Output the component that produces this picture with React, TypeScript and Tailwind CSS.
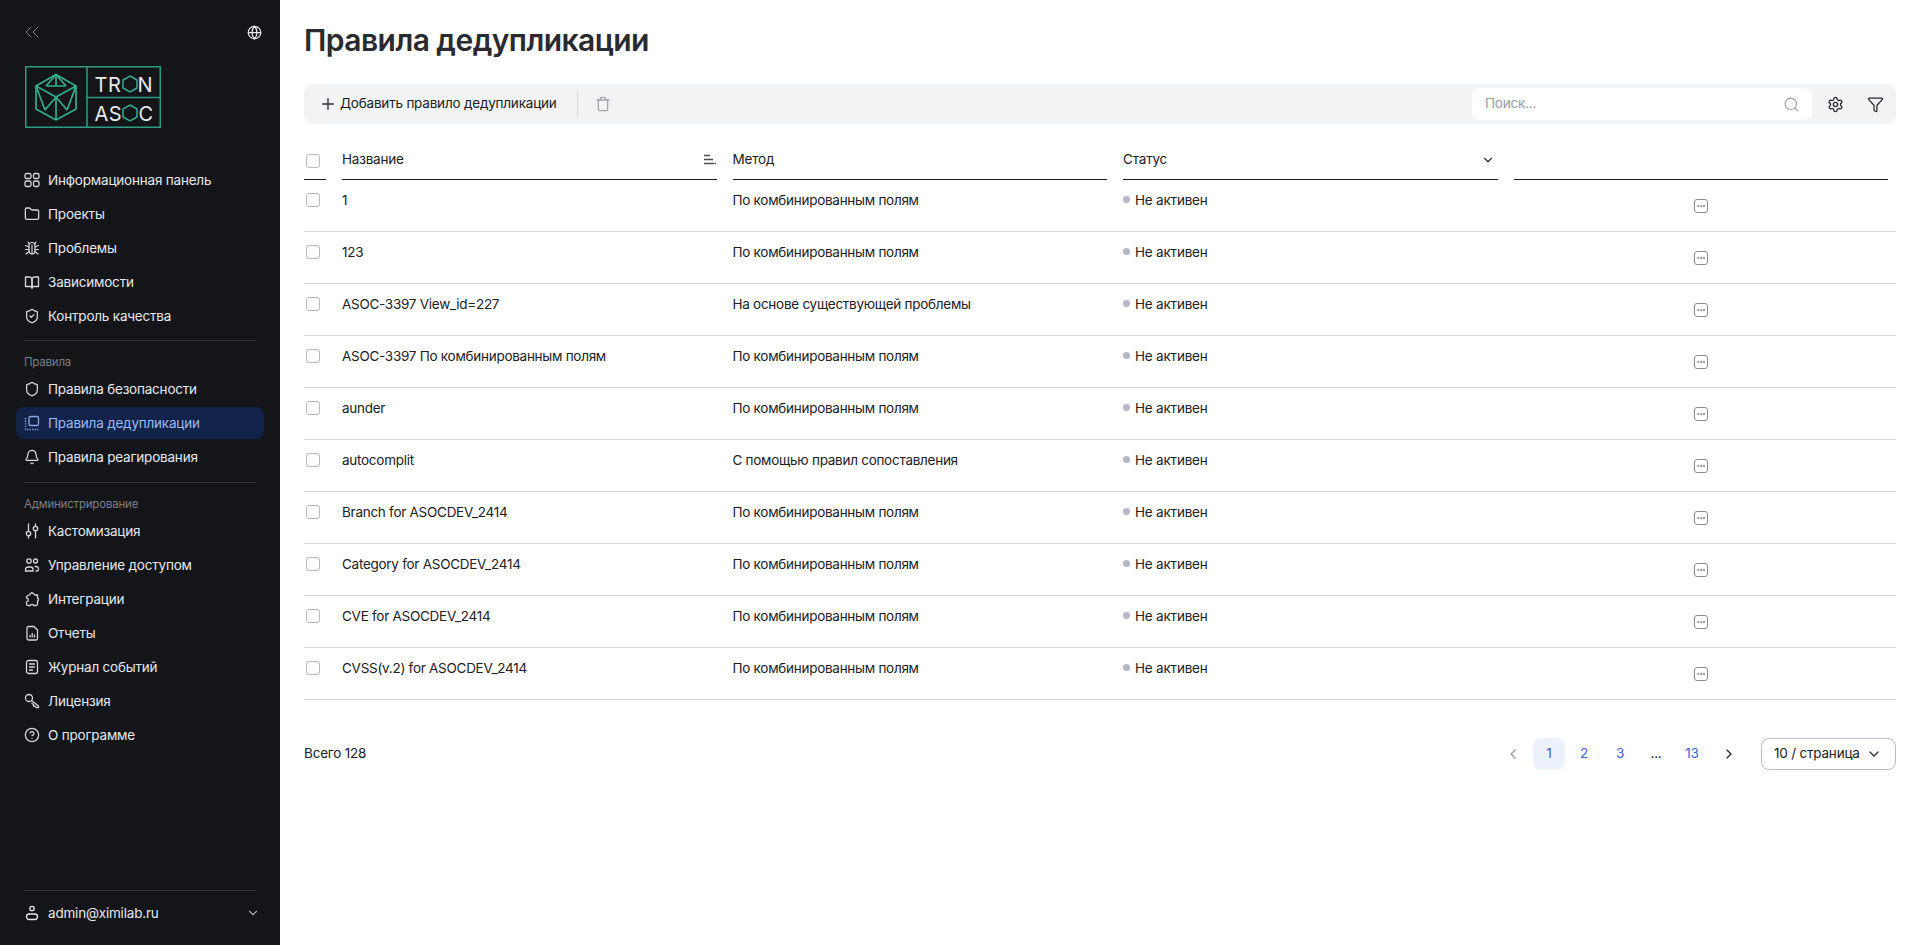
import {
  ChevronDown,
  ChevronLeft,
  ChevronRight,
  ChevronsLeft,
  CircleHelp,
  Ellipsis,
  Folder,
  Funnel,
  Globe,
  Plus,
  Search,
  Settings,
  Trash,
  ShieldCheck,
  Shield,
  Bell,
} from 'lucide-react';
import type { ReactNode } from 'react';

const iconCls = 'w-4 h-4 shrink-0';

function DashIcon() {
  return (
    <svg viewBox="0 0 16 16" className={iconCls} fill="none" stroke="currentColor" strokeWidth="1.3">
      <rect x="1" y="1.500" width="6" height="5" rx="1.500" />
      <rect x="9.500" y="1.500" width="5.500" height="5" rx="1.500" />
      <rect x="1" y="9" width="6" height="5.500" rx="1.500" />
      <rect x="9.500" y="9" width="5.500" height="5.500" rx="1.500" />
    </svg>
  );
}

function BugIcon() {
  return (
    <svg viewBox="0 0 16 16" className={iconCls} fill="none" stroke="currentColor" strokeWidth="1.200" strokeLinecap="round">
      <path d="M5 5.500a3 3 0 0 1 6 0V11a3 3 0 0 1-6 0Z" />
      <path d="M8 5v9M5.500 4.500 4 2M10.500 4.500 12 2M5 7 1.500 5.500M11 7l3.500-1.500M5 9.500H1.500M11 9.500h3.500M5 11.500 2 14M11 11.500l3 2.500" />
    </svg>
  );
}

function BookIcon() {
  return (
    <svg viewBox="0 0 16 16" className={iconCls} fill="none" stroke="currentColor" strokeWidth="1.300" strokeLinejoin="round">
      <path d="M1.500 3h4A2.500 2.500 0 0 1 8 5v9a2 2 0 0 0-2-1.500H1.500Z" />
      <path d="M14.500 3h-4A2.500 2.500 0 0 0 8 5v9a2 2 0 0 1 2-1.500h4.500Z" />
    </svg>
  );
}

function DedupIcon() {
  return (
    <svg viewBox="0 0 16 16" className={iconCls} fill="none" stroke="currentColor" strokeWidth="1.300">
      <rect x="5" y="1.500" width="9.500" height="9" rx="1.500" />
      <path d="M1.500 3v11.500h13" strokeDasharray="1.300 1.300" />
    </svg>
  );
}

function TuneIcon() {
  return (
    <svg viewBox="0 0 16 16" className={iconCls} fill="none" stroke="currentColor" strokeWidth="1.300" strokeLinecap="round">
      <path d="M4.500 1v7M4.500 13v2M11.500 1v2M11.500 8v7" />
      <circle cx="4.500" cy="10.500" r="2.200" />
      <circle cx="11.500" cy="5.500" r="2.200" />
    </svg>
  );
}

function UsersIcon() {
  return (
    <svg viewBox="0 0 16 16" className={iconCls} fill="none" stroke="currentColor" strokeWidth="1.300" strokeLinecap="round">
      <circle cx="5" cy="4" r="2.200" />
      <circle cx="11.500" cy="4" r="2" />
      <path d="M1.500 14v-1.500A2.500 2.500 0 0 1 4 10h2.500A2.500 2.500 0 0 1 9 12.500V14H1.500Z" />
      <path d="M11 9.500h1.500a2.500 2.500 0 0 1 2 2.500v.5a1.500 1.500 0 0 1-1.500 1.500h-1" />
    </svg>
  );
}

function PuzzleIcon() {
  return (
    <svg viewBox="0 0 16 16" className={iconCls} fill="none" stroke="currentColor" strokeWidth="1.300" strokeLinejoin="round">
      <path d="M8 1.500 11 4h2.500v3.200a1.600 1.600 0 0 1 0 3V13a1.500 1.500 0 0 1-1.500 1.500H9.500a1.600 1.600 0 0 0-3 0H4A1.500 1.500 0 0 1 2.500 13v-2.200a1.800 1.800 0 0 0 0-3.600V5.500L5 4Z" />
    </svg>
  );
}

function ReportIcon() {
  return (
    <svg viewBox="0 0 16 16" className={iconCls} fill="none" stroke="currentColor" strokeWidth="1.300" strokeLinejoin="round">
      <path d="M3 3a1.500 1.500 0 0 1 1.500-1.500H10L13.500 5v8.500A1.500 1.500 0 0 1 12 15H4.500A1.500 1.500 0 0 1 3 13.500Z" />
      <path d="M6 12.500V10M8.200 12.500V8M10.500 12.500V9.500" />
    </svg>
  );
}

function JournalIcon() {
  return (
    <svg viewBox="0 0 16 16" className={iconCls} fill="none" stroke="currentColor" strokeWidth="1.300" strokeLinecap="round">
      <rect x="2.500" y="1.500" width="11" height="13" rx="2" />
      <path d="M5.500 5h5M5.500 8h5M5.500 11h3" />
    </svg>
  );
}

function KeyIcon() {
  return (
    <svg viewBox="0 0 16 16" className={iconCls} fill="none" stroke="currentColor" strokeWidth="1.300" strokeLinejoin="round">
      <circle cx="5" cy="5" r="3.500" />
      <path d="M7.500 7.500 14.500 13v1.500h-2.500L11 13H9.500v-1.500L7.500 10" />
    </svg>
  );
}

function UserIcon() {
  return (
    <svg viewBox="0 0 16 16" className={iconCls} fill="none" stroke="currentColor" strokeWidth="1.300">
      <circle cx="8" cy="3.500" r="2.200" />
      <rect x="2.500" y="9" width="11" height="5.500" rx="2.750" />
    </svg>
  );
}

function SortIcon() {
  return (
    <svg viewBox="0 0 14 14" className="w-[14px] h-[14px]" fill="none" stroke="#4b4d55" strokeWidth="1.500">
      <path d="M1 2.500h6M1 6.500h9M1 10.500h10.500" />
      <path d="M12 10.500h1" />
    </svg>
  );
}

function Logo() {
  return (
    <svg viewBox="0 0 136 62" className="w-[136px] h-[62px] block" fill="none">
      <g stroke="#2f9c80" strokeWidth="1.500">
        <rect x="0.750" y="0.750" width="134.500" height="60.500" />
        <path d="M62 0.750v60.500M62 31.500h73.500" />
      </g>
      <g stroke="#32ad8d" strokeWidth="1.700" strokeLinejoin="round">
        <path d="M31 8.500 51 20v23L31 54 11 43V20Z" />
        <path d="M11 20 31 31l20-11M31 31v23M31 8.500 21 20M31 8.500 41 20M21 20h20M31 8.500v11.500M11 20l9 24M51 20l-9 24M31 31l-11 13M31 31l11 13" />
      </g>
      <g stroke="#32ad8d" strokeWidth="1.500">
        <path d="M105 10l7 4v8l-7 4-7-4v-8Z" />
        <path d="M105 39l7 4v8l-7 4-7-4v-8Z" />
      </g>
      <text x="69.500" y="25.500" fill="#e8e9eb" fontFamily="Inter, sans-serif" fontSize="20" fontWeight="400" letterSpacing="0.5">TR</text>
      <text x="112.500" y="25.500" fill="#e8e9eb" fontFamily="Inter, sans-serif" fontSize="20" fontWeight="400">N</text>
      <text x="69.500" y="54.500" fill="#e8e9eb" fontFamily="Inter, sans-serif" fontSize="20" fontWeight="400" letterSpacing="0.5">AS</text>
      <text x="113.500" y="54.500" fill="#e8e9eb" fontFamily="Inter, sans-serif" fontSize="20" fontWeight="400">C</text>
    </svg>
  );
}

function NavItem({ icon, label, active }: { icon: ReactNode; label: string; active?: boolean }) {
  return (
    <div
      className={`flex items-center gap-2 h-8 mx-4 px-2 my-px rounded-lg ${
        active ? 'bg-[#12234a] text-[#9db8f5]' : 'text-[#e6e8ee]'
      }`}
    >
      <span className={active ? 'text-[#8aa6e6]' : 'text-[#d5d7dc]'}>{icon}</span>
      <span>{label}</span>
    </div>
  );
}

const rows = [
  ['1', 'По комбинированным полям'],
  ['123', 'По комбинированным полям'],
  ['ASOC-3397 View_id=227', 'На основе существующей проблемы'],
  ['ASOC-3397 По комбинированным полям', 'По комбинированным полям'],
  ['aunder', 'По комбинированным полям'],
  ['autocomplit', 'С помощью правил сопоставления'],
  ['Branch for ASOCDEV_2414', 'По комбинированным полям'],
  ['Category for ASOCDEV_2414', 'По комбинированным полям'],
  ['CVE for ASOCDEV_2414', 'По комбинированным полям'],
  ['CVSS(v.2) for ASOCDEV_2414', 'По комбинированным полям'],
];

function Checkbox() {
  return <div className="w-[14px] h-[14px] mx-[2px] rounded-[3px] border border-[#b9bac6] bg-white" />;
}

function Sidebar() {
  return (
    <aside className="w-[280px] shrink-0 h-[945px] bg-[#141518] flex flex-col">
      <div className="flex items-center justify-between pl-[20px] pr-[18px] pt-[24px] h-[40px] text-[#7f8188]">
        <ChevronsLeft className="w-6 h-6" strokeWidth={1} />
        <Globe className="w-[15px] h-[15px] text-[#e6e8ee]" strokeWidth={2} />
      </div>
      <div className="pl-[25px] pt-[26px] pb-[35px]">
        <Logo />
      </div>
      <NavItem icon={<DashIcon />} label="Информационная панель" />
      <NavItem icon={<Folder className={iconCls} strokeWidth={1.9} />} label="Проекты" />
      <NavItem icon={<BugIcon />} label="Проблемы" />
      <NavItem icon={<BookIcon />} label="Зависимости" />
      <NavItem icon={<ShieldCheck className={iconCls} strokeWidth={1.9} />} label="Контроль качества" />
      <div className="mx-6 mt-[7px] border-t border-[#34353a]" />
      <div className="pl-6 pt-[13px] pb-[2px] text-[11.500px] leading-4 text-[#7b7e87]">Правила</div>
      <NavItem icon={<Shield className={iconCls} strokeWidth={1.9} />} label="Правила безопасности" />
      <NavItem icon={<DedupIcon />} label="Правила дедупликации" active />
      <NavItem icon={<Bell className={iconCls} strokeWidth={1.9} />} label="Правила реагирования" />
      <div className="mx-6 mt-[8px] border-t border-[#34353a]" />
      <div className="pl-6 pt-[13px] pb-[2px] text-[11.500px] leading-4 text-[#7b7e87]">Администрирование</div>
      <NavItem icon={<TuneIcon />} label="Кастомизация" />
      <NavItem icon={<UsersIcon />} label="Управление доступом" />
      <NavItem icon={<PuzzleIcon />} label="Интеграции" />
      <NavItem icon={<ReportIcon />} label="Отчеты" />
      <NavItem icon={<JournalIcon />} label="Журнал событий" />
      <NavItem icon={<KeyIcon />} label="Лицензия" />
      <NavItem icon={<CircleHelp className={iconCls} strokeWidth={1.9} />} label="О программе" />
      <div className="mt-auto mx-6 border-t border-[#34353a]" />
      <div className="flex items-center justify-between h-[44px] pl-6 pr-[20px] mb-[10px] text-[#e6e8ee]">
        <div className="flex items-center gap-2">
          <UserIcon />
          <span>admin@ximilab.ru</span>
        </div>
        <ChevronDown className="w-[14px] h-[14px] text-[#a5a7ad]" strokeWidth={2} />
      </div>
    </aside>
  );
}

export default function App() {
  return (
    <div className="flex min-h-[945px] bg-white font-['Inter',sans-serif] text-[13.500px] tracking-[-0.2px] text-[#202126]">
      <Sidebar />
      <main className="flex-1 px-6 min-w-0">
        <h1 className="pt-[20px] h-[84px] text-[30px] leading-10 font-semibold tracking-[-0.55px] text-[#2a2b30]">Правила дедупликации</h1>

        <div className="h-10 bg-[#f2f3f5] rounded-[10px] flex items-center pl-4 pr-[12px]">
          <Plus className="w-[18px] h-[18px] text-[#2a2b30] mr-[3px] -ml-[1px]" strokeWidth={1.8} />
          <span className="pb-[2px]">Добавить правило дедупликации</span>
          <div className="w-px h-6 bg-[#d5d6da] ml-[20px] mr-[17px]" />
          <Trash className="w-[16px] h-[16px] text-[#a3a5ad]" strokeWidth={1.9} />
          <div className="ml-auto w-[340px] h-8 bg-white rounded-lg flex items-center justify-between pl-[13px] pr-[12px]">
            <span className="text-[#9a9ca5] pb-[2px]">Поиск...</span>
            <Search className="w-[17px] h-[17px] text-[#9a9ca5]" strokeWidth={1.5} />
          </div>
          <Settings className="w-[17px] h-[17px] ml-[15px] text-[#2a2b30]" strokeWidth={1.9} />
          <Funnel className="w-[17px] h-[17px] ml-[23px] text-[#2a2b30]" strokeWidth={1.8} />
        </div>

        <div className="grid grid-cols-[22px_repeat(4,1fr)] gap-x-4 pr-2 h-[56px]">
          <div className="border-b-[1.500px] border-[#1c1d21] flex items-center pt-[18px]">
            <Checkbox />
          </div>
          <div className="border-b-[1.500px] border-[#1c1d21] flex items-center justify-between pt-[16px]">
            <span>Название</span>
            <SortIcon />
          </div>
          <div className="border-b-[1.500px] border-[#1c1d21] flex items-center pt-[16px]">Метод</div>
          <div className="border-b-[1.500px] border-[#1c1d21] flex items-center justify-between pt-[16px]">
            <span>Статус</span>
            <ChevronDown className="w-[14px] h-[14px] mr-[3px] text-[#2a2b30]" strokeWidth={2} />
          </div>
          <div className="border-b-[1.500px] border-[#1c1d21]" />
        </div>

        {rows.map((row, i) => (
          <div key={i} className="grid grid-cols-[22px_repeat(4,1fr)] gap-x-4 pr-2 h-[52px] border-b border-[#d3d4da] leading-5">
            <div className="pt-[13px]">
              <Checkbox />
            </div>
            <div className="pt-[10px] tracking-[-0.27px]">{row[0]}</div>
            <div className="pt-[10px] tracking-[-0.27px]">{row[1]}</div>
            <div className="pt-[10px] flex items-start gap-[5px]">
              <span className="w-[7px] h-[7px] rounded-full bg-[#b6b7c4] mt-[6px]" />
              <span>Не активен</span>
            </div>
            <div className="pt-[19px] flex justify-center">
              <div className="w-[14px] h-[14px] rounded-[3px] border-[1.500px] border-[#8b8d97] flex items-center justify-center">
                <Ellipsis className="w-[10px] h-[10px] text-[#6f717b]" strokeWidth={2.4} />
              </div>
            </div>
          </div>
        ))}

        <div className="flex items-center justify-between mt-[38px] h-8">
          <span className="pb-[2px]">Всего 128</span>
          <div className="flex items-center">
            <ChevronLeft className="w-[16px] h-[16px] text-[#9a9ca5] mr-[12px]" strokeWidth={1.9} />
            <div className="w-8 h-8 rounded-lg bg-[#edf1fb] text-[#3f5fd1] flex items-center justify-center pb-[2px]">1</div>
            <div className="w-8 h-8 ml-[3px] text-[#3d62e0] flex items-center justify-center pb-[2px]">2</div>
            <div className="w-8 h-8 ml-1 text-[#3d62e0] flex items-center justify-center pb-[2px]">3</div>
            <div className="w-8 h-8 ml-1 flex items-center justify-center pb-[2px]">...</div>
            <div className="w-8 h-8 ml-1 text-[#3d62e0] flex items-center justify-center pb-[2px]">13</div>
            <ChevronRight className="w-[16px] h-[16px] text-[#2a2b30] ml-[13px]" strokeWidth={2} />
            <div className="w-[135px] h-8 ml-[24px] rounded-lg border border-[#babbc6] flex items-center justify-between pl-3 pr-[13px]">
              <span className="pb-[2px]">10 / страница</span>
              <ChevronDown className="w-[16px] h-[16px] text-[#2a2b30]" strokeWidth={1.8} />
            </div>
          </div>
        </div>
      </main>
    </div>
  );
}
